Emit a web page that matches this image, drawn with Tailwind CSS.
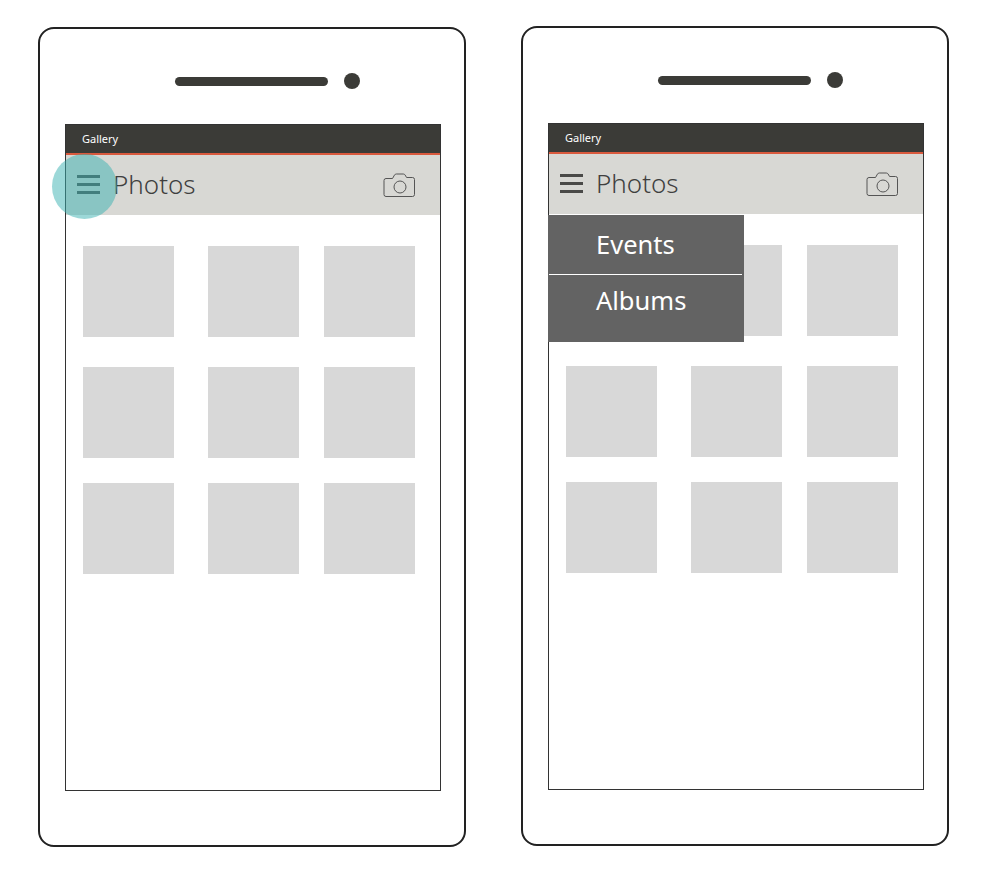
<!doctype html>
<html>
<head>
<meta charset="utf-8">
<title>Gallery wireframes</title>
<script src="https://cdn.jsdelivr.net/npm/@tailwindcss/browser@4"></script>
</head>
<body class="bg-white font-['Noto_Sans',sans-serif]">
<div class="flex w-[981px] h-[870px] overflow-hidden pl-[38px]">

  <!-- left phone, menu button pressed -->
  <div class="w-[428px] h-[820px] mt-[27px] shrink-0 border-2 border-[#222222] rounded-[16px]">
    <div class="flex items-center gap-4 pt-[44px] pl-[135px]">
      <div class="w-[153px] h-[9px] rounded-full bg-[#3b3b37]"></div>
      <div class="w-4 h-4 rounded-full bg-[#3b3b37]"></div>
    </div>
    <div class="relative w-[376px] h-[667px] mt-[35px] ml-[25px] border border-[#333333]">
      <div class="flex items-center h-[28px] bg-[#3b3b37] border-b-2 border-[#d9593d] box-content pl-4 text-[11px] text-white">Gallery</div>
      <div class="flex items-center justify-between h-[60px] pl-[11px] pr-[24px] pb-[2px] bg-[#d8d8d4]">
        <div class="flex items-center gap-[13px]">
          <div class="flex flex-col gap-[5px] w-[23px]">
            <div class="h-[3px] bg-[#4a4a48]"></div>
            <div class="h-[3px] bg-[#4a4a48]"></div>
            <div class="h-[3px] bg-[#4a4a48]"></div>
          </div>
          <span class="text-[26px] font-light leading-none text-[#3f3f3f]">Photos</span>
        </div>
        <svg class="mt-[2px]" width="33" height="27" viewBox="0 0 33 27" fill="none" stroke="#555555" stroke-width="1">
          <path d="M3 6.5h6.5l2-3.5q.6-1 1.8-1h7q1.2 0 1.8 1l1.5 2.5h5.900q2 0 2 2v15q0 2-2 2H3q-2 0-2-2V8.500q0-2 2-2z"/>
          <circle cx="17" cy="15" r="6"/>
        </svg>
      </div>
      <div class="grid grid-cols-[125px_116px_91px] grid-rows-[121px_116px_91px] pt-[31px] pl-[17px]">
        <div class="w-[91px] h-[91px] bg-[#d8d8d8]"></div>
        <div class="w-[91px] h-[91px] bg-[#d8d8d8]"></div>
        <div class="w-[91px] h-[91px] bg-[#d8d8d8]"></div>
        <div class="w-[91px] h-[91px] bg-[#d8d8d8]"></div>
        <div class="w-[91px] h-[91px] bg-[#d8d8d8]"></div>
        <div class="w-[91px] h-[91px] bg-[#d8d8d8]"></div>
        <div class="w-[91px] h-[91px] bg-[#d8d8d8]"></div>
        <div class="w-[91px] h-[91px] bg-[#d8d8d8]"></div>
        <div class="w-[91px] h-[91px] bg-[#d8d8d8]"></div>
      </div>
      <!-- touch highlight -->
      <div class="absolute left-[-14px] top-[29px] w-[65px] h-[65px] rounded-full bg-[#39b2b2]/50"></div>
    </div>
  </div>

  <!-- right phone, menu open -->
  <div class="w-[428px] h-[820px] mt-[26px] ml-[55px] shrink-0 border-2 border-[#222222] rounded-[16px]">
    <div class="flex items-center gap-4 pt-[44px] pl-[135px]">
      <div class="w-[153px] h-[9px] rounded-full bg-[#3b3b37]"></div>
      <div class="w-4 h-4 rounded-full bg-[#3b3b37]"></div>
    </div>
    <div class="relative w-[376px] h-[667px] mt-[35px] ml-[25px] border border-[#333333]">
      <div class="flex items-center h-[28px] bg-[#3b3b37] border-b-2 border-[#d9593d] box-content pl-4 text-[11px] text-white">Gallery</div>
      <div class="flex items-center justify-between h-[60px] pl-[11px] pr-[24px] pb-[2px] bg-[#d8d8d4]">
        <div class="flex items-center gap-[13px]">
          <div class="flex flex-col gap-[5px] w-[23px]">
            <div class="h-[3px] bg-[#4a4a48]"></div>
            <div class="h-[3px] bg-[#4a4a48]"></div>
            <div class="h-[3px] bg-[#4a4a48]"></div>
          </div>
          <span class="text-[26px] font-light leading-none text-[#3f3f3f]">Photos</span>
        </div>
        <svg class="mt-[2px]" width="33" height="27" viewBox="0 0 33 27" fill="none" stroke="#555555" stroke-width="1">
          <path d="M3 6.5h6.5l2-3.5q.6-1 1.8-1h7q1.2 0 1.8 1l1.5 2.5h5.900q2 0 2 2v15q0 2-2 2H3q-2 0-2-2V8.500q0-2 2-2z"/>
          <circle cx="17" cy="15" r="6"/>
        </svg>
      </div>
      <div class="grid grid-cols-[125px_116px_91px] grid-rows-[121px_116px_91px] pt-[31px] pl-[17px]">
        <div class="w-[91px] h-[91px] bg-[#d8d8d8]"></div>
        <div class="w-[91px] h-[91px] bg-[#d8d8d8]"></div>
        <div class="w-[91px] h-[91px] bg-[#d8d8d8]"></div>
        <div class="w-[91px] h-[91px] bg-[#d8d8d8]"></div>
        <div class="w-[91px] h-[91px] bg-[#d8d8d8]"></div>
        <div class="w-[91px] h-[91px] bg-[#d8d8d8]"></div>
        <div class="w-[91px] h-[91px] bg-[#d8d8d8]"></div>
        <div class="w-[91px] h-[91px] bg-[#d8d8d8]"></div>
        <div class="w-[91px] h-[91px] bg-[#d8d8d8]"></div>
      </div>
      <!-- dropdown -->
      <div class="absolute left-[-1px] top-[91px] w-[196px] h-[127px] bg-[#636363] text-[25.5px] leading-none text-white">
        <div class="flex items-center h-[60px] pl-[47px] ml-[1px] mr-[2px] border-b border-white">Events</div>
        <div class="flex items-center h-[52px] pl-[48px]">Albums</div>
      </div>
    </div>
  </div>

</div>
</body>
</html>
